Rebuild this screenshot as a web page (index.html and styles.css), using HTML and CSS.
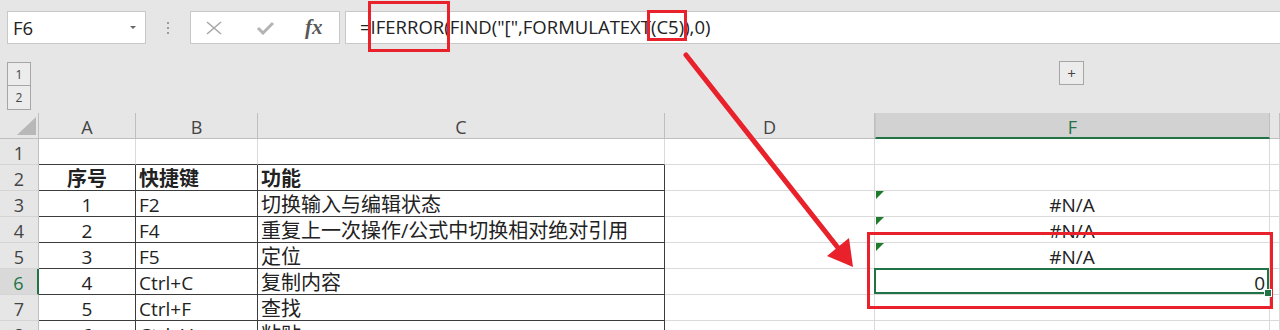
FILE: index.html
```html
<!DOCTYPE html>
<html lang="zh-CN">
<head>
    <meta charset="UTF-8">
    <title>FORMULATEXT</title>
    <link rel="stylesheet" href="styles.css">
</head>
<body>
    <div class="toolbar">
        <div class="namebox"><span class="name">F6</span><span class="caret"></span></div>
        <div class="grip"><i></i><i></i><i></i></div>
        <div class="fxbox">
            <svg class="icon-x" width="16" height="14" viewBox="0 0 16 14"><path d="M1 1L15 13M15 1L1 13" stroke="#a8a8a8" stroke-width="1.6" fill="none"/></svg>
            <svg class="icon-ok" width="18" height="14" viewBox="0 0 18 14"><path d="M2 7L7 12L17 2" stroke="#b4b4b4" stroke-width="3" fill="none"/></svg>
            <span class="fx">fx</span>
        </div>
        <div class="formula">=<span class="mark mark-tall">IFERROR(</span>FIND("[",FORMULATEXT<span class="mark mark-small">(C5)</span>),0)</div>
    </div>

    <div class="outline">
        <div class="levels">
            <div class="level">1</div>
            <div class="level">2</div>
        </div>
        <div class="expand">+</div>
    </div>

    <div class="sheet">
        <!-- header row -->
        <div class="hd corner"><svg width="19" height="18" viewBox="0 0 19 18"><polygon points="19,0 19,18 0,18" fill="#b8b8b8"/></svg></div>
        <div class="hd col">A</div>
        <div class="hd col">B</div>
        <div class="hd col">C</div>
        <div class="hd col d">D</div>
        <div class="hd col f">F</div>
        <div class="hd col"></div>

        <!-- row 1 -->
        <div class="hd row">1</div>
        <div class="c top"></div>
        <div class="c top"></div>
        <div class="c top"></div>
        <div class="c"></div>
        <div class="c"></div>
        <div class="c"></div>

        <!-- row 2 -->
        <div class="hd row">2</div>
        <div class="c t ctr cjk b">序号</div>
        <div class="c t cjk b">快捷键</div>
        <div class="c t cjk b">功能</div>
        <div class="c"></div>
        <div class="c"></div>
        <div class="c"></div>

        <!-- row 3 -->
        <div class="hd row">3</div>
        <div class="c t ctr">1</div>
        <div class="c t">F2</div>
        <div class="c t cjk">切换输入与编辑状态</div>
        <div class="c"></div>
        <div class="c ctr err">#N/A</div>
        <div class="c"></div>

        <!-- row 4 -->
        <div class="hd row">4</div>
        <div class="c t ctr">2</div>
        <div class="c t">F4</div>
        <div class="c t cjk">重复上一次操作/公式中切换相对绝对引用</div>
        <div class="c"></div>
        <div class="c ctr err">#N/A</div>
        <div class="c"></div>

        <!-- row 5 -->
        <div class="hd row">5</div>
        <div class="c t ctr">3</div>
        <div class="c t">F5</div>
        <div class="c t cjk">定位</div>
        <div class="c"></div>
        <div class="c ctr err">#N/A</div>
        <div class="c"></div>

        <!-- row 6 -->
        <div class="hd row sel">6</div>
        <div class="c t ctr">4</div>
        <div class="c t">Ctrl+C</div>
        <div class="c t cjk">复制内容</div>
        <div class="c"></div>
        <div class="c num active">0</div>
        <div class="c"></div>

        <!-- row 7 -->
        <div class="hd row">7</div>
        <div class="c t ctr">5</div>
        <div class="c t">Ctrl+F</div>
        <div class="c t cjk">查找</div>
        <div class="c"></div>
        <div class="c"></div>
        <div class="c"></div>

        <!-- row 8 -->
        <div class="hd row">8</div>
        <div class="c t ctr">6</div>
        <div class="c t">Ctrl+V</div>
        <div class="c t cjk">粘贴</div>
        <div class="c"></div>
        <div class="c"></div>
        <div class="c"></div>
    </div>

    <!-- red annotations drawn over the sheet -->
    <svg class="notes" width="1280" height="330" viewBox="0 0 1280 330">
        <rect x="868.5" y="233.5" width="403" height="74" fill="none" stroke="#e8212b" stroke-width="3"/>
        <line x1="686" y1="55" x2="839" y2="249" stroke="#e8212b" stroke-width="5" stroke-linecap="round"/>
        <polygon points="853,267 827,256 849,238" fill="#e8212b"/>
    </svg>
</body>
</html>
```

FILE: styles.css
```css
* {
    box-sizing: border-box;
}

body {
    margin: 0;
    width: 1280px;
    height: 330px;
    overflow: hidden;
    position: relative;
    background: #e6e6e6;
    font-family: "Open Sans", "Noto Sans CJK SC", sans-serif;
    color: #222;
}

/* formula bar */
.toolbar {
    height: 48px;
    padding-top: 11px;
    display: flex;
    align-items: flex-start;
}

.namebox {
    margin-left: 7px;
    width: 139px;
    height: 33px;
    background: #fff;
    border: 1px solid #c8c8c8;
    display: flex;
    align-items: center;
    padding: 0 9px 0 5px;
    font-size: 18.5px;
}

.namebox .name {
    flex: 1;
}

.caret {
    width: 0;
    height: 0;
    border-left: 3px solid transparent;
    border-right: 3px solid transparent;
    border-top: 3px solid #666;
}

.grip {
    width: 44px;
    height: 33px;
    display: flex;
    flex-direction: column;
    align-items: center;
    justify-content: center;
    gap: 3px;
}

.grip i {
    width: 2px;
    height: 2px;
    background: #9a9a9a;
}

.fxbox {
    width: 150px;
    height: 33px;
    background: #fff;
    border: 1px solid #c8c8c8;
    display: flex;
    align-items: center;
    padding-left: 15px;
}

.icon-ok {
    margin-left: 34px;
}

.fx {
    margin-left: 31px;
    font-family: "Liberation Serif", serif;
    font-style: italic;
    font-weight: bold;
    font-size: 21px;
    color: #595959;
}

.formula {
    flex: 1;
    margin-left: 5px;
    height: 33px;
    background: #fff;
    border: 1px solid #c8c8c8;
    border-right: none;
    padding-left: 14px;
    font-size: 18.5px;
    line-height: 29px;
    white-space: nowrap;
}

.mark {
    display: inline-block;
    position: relative;
}

.mark::after {
    content: "";
    position: absolute;
    border: 3px solid #e8212b;
}

.mark-tall::after {
    top: -11px;
    bottom: -11px;
    left: -3px;
    right: 0;
}

.mark-small::after {
    top: -2px;
    bottom: 0;
    left: -4px;
    right: -3px;
}

/* outline level buttons */
.outline {
    height: 65px;
    display: flex;
    align-items: flex-start;
}

.levels {
    margin-left: 7px;
    margin-top: 14px;
    display: flex;
    flex-direction: column;
}

.level,
.expand {
    width: 24px;
    height: 24px;
    border: 1px solid #a6a6a6;
    background: #ececec;
    color: #444;
    font-size: 12px;
    display: flex;
    align-items: center;
    justify-content: center;
}

.level + .level {
    border-top: none;
}

.expand {
    width: 25px;
    margin-left: 1028px;
    margin-top: 13px;
    font-size: 15px;
}

/* sheet grid */
.sheet {
    display: grid;
    grid-template-columns: 39px 97px 122px 407px 210px 395px 10px;
    grid-auto-rows: 26px;
    font-size: 19px;
}

.hd {
    background: #e6e6e6;
    border-right: 1px solid #bfbfbf;
    border-bottom: 1px solid #bfbfbf;
    color: #444;
    font-size: 18px;
    display: flex;
    align-items: center;
    justify-content: center;
}

.hd.col {
    padding-top: 3px;
}

.hd.row {
    padding-top: 2px;
    border-bottom-color: #d4d4d4;
}

.corner {
    align-items: flex-end;
    justify-content: flex-end;
    padding: 0 2px 3px 0;
}

.hd.f {
    border-left: 1px solid #c6c6c6;
    border-bottom: 2px solid #217346;
    background: #d2d2d2;
    color: #217346;
}

.hd.sel {
    background: #d9d9d9;
    color: #217346;
    border-right: 2px solid #217346;
}

.c {
    background: #fff;
    border-right: 1px solid #dadada;
    border-bottom: 1px solid #dadada;
    padding: 2px 3px 0;
    line-height: 24px;
    white-space: nowrap;
}

.c.top {
    border-bottom-color: #3c3c3c;
}

.c.t {
    border-right-color: #3c3c3c;
    border-bottom-color: #3c3c3c;
}

.cjk {
    font-size: 20px;
}

.b {
    font-weight: bold;
}

.ctr {
    text-align: center;
}

.num {
    text-align: right;
    padding-right: 4px;
}

.err {
    position: relative;
}

.err::before {
    content: "";
    position: absolute;
    top: 0;
    left: 1px;
    border-top: 8px solid #1d7b2c;
    border-right: 8px solid transparent;
}

.active {
    position: relative;
}

.active::after {
    content: "";
    position: absolute;
    top: -1px;
    left: -1px;
    right: 0;
    bottom: 0;
    border: 2px solid #217346;
}

.active::before {
    content: "";
    position: absolute;
    right: -3px;
    bottom: -3px;
    width: 6px;
    height: 6px;
    background: #217346;
    border: 1px solid #fff;
    z-index: 1;
}

.notes {
    position: absolute;
    top: 0;
    left: 0;
    pointer-events: none;
}
```
